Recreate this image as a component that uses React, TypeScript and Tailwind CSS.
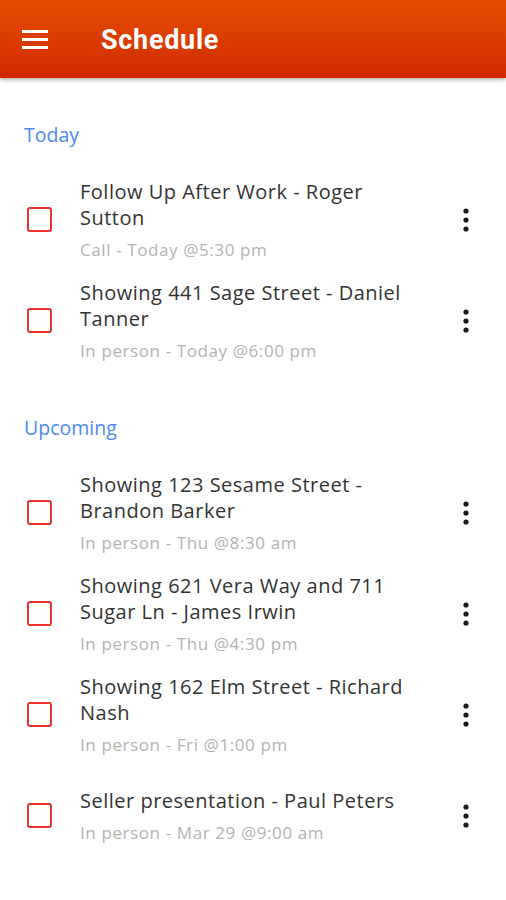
import React from 'react';

type Task = { title: string; meta: string };

const sections: { label: string; tasks: Task[] }[] = [
  {
    label: 'Today',
    tasks: [
      { title: 'Follow Up After Work - Roger Sutton', meta: 'Call - Today @5:30 pm' },
      { title: 'Showing 441 Sage Street - Daniel Tanner', meta: 'In person - Today @6:00 pm' },
    ],
  },
  {
    label: 'Upcoming',
    tasks: [
      { title: 'Showing 123 Sesame Street - Brandon Barker', meta: 'In person - Thu @8:30 am' },
      { title: 'Showing 621 Vera Way and 711 Sugar Ln - James Irwin', meta: 'In person - Thu @4:30 pm' },
      { title: 'Showing 162 Elm Street - Richard Nash', meta: 'In person - Fri @1:00 pm' },
      { title: 'Seller presentation - Paul Peters', meta: 'In person - Mar 29 @9:00 am' },
    ],
  },
];

function Kebab() {
  return (
    <svg width="10" height="26" viewBox="0 0 10 26" className="text-[#1a1a1a]">
      <circle cx="5" cy="4" r="2.6" fill="currentColor" />
      <circle cx="5" cy="13" r="2.6" fill="currentColor" />
      <circle cx="5" cy="22" r="2.6" fill="currentColor" />
    </svg>
  );
}

function TaskRow({ task }: { task: Task }) {
  return (
    <div className="flex items-center h-[101px]">
      <div className="w-[80px] shrink-0 pl-[27px]">
        <div className="w-[25px] h-[25px] border-2 border-[#e8322a] rounded-[3px]" />
      </div>
      <div className="w-[338px] shrink-0">
        <div className="text-[20px] leading-[26px] tracking-[0.5px] text-[#333]">{task.title}</div>
        <div className="mt-[8px] text-[17px] leading-[22px] tracking-[0.6px] text-[#b3b3b3]">{task.meta}</div>
      </div>
      <div className="flex-1 flex justify-end pr-[35px]">
        <Kebab />
      </div>
    </div>
  );
}

export default function App() {
  return (
    <div className="w-[506px] h-[900px] bg-white overflow-hidden" style={{ fontFamily: '"Open Sans", sans-serif' }}>
      <header className="relative z-10 h-[78px] flex items-center bg-gradient-to-b from-[#e44d00] to-[#d22800] shadow-[0_2px_4px_rgba(0,0,0,0.3)]">
        <div className="pl-[22px] w-[101px] flex flex-col gap-[5px]">
          <div className="w-[26px] h-[3px] bg-white" />
          <div className="w-[26px] h-[3px] bg-white" />
          <div className="w-[26px] h-[3px] bg-white" />
        </div>
        <h1 className="text-white text-[27px] tracking-[0.7px] font-bold leading-none pt-[3px]" style={{ fontFamily: 'Roboto, sans-serif' }}>
          Schedule
        </h1>
      </header>
      {sections.map((s) => (
        <section key={s.label}>
          <div className="pt-[44px] pb-[21px] pl-[24px] text-[19.5px] leading-[26px] text-[#4a8af4]">{s.label}</div>
          {s.tasks.map((t, i) => (
            <TaskRow key={i} task={t} />
          ))}
        </section>
      ))}
    </div>
  );
}
